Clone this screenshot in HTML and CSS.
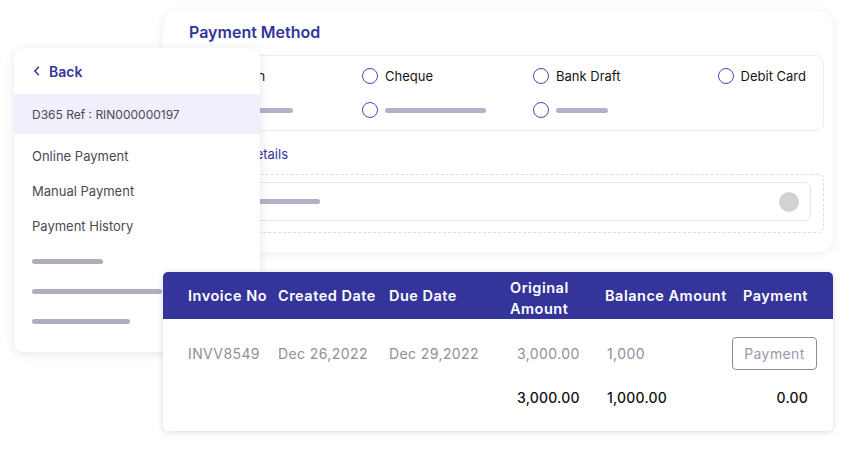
FILE: index.html
```html
<!DOCTYPE html>
<html lang="en">
<head>
<meta charset="utf-8">
<title>Payment</title>
<link rel="stylesheet" href="styles.css">
</head>
<body>
<div class="stage">
  <section class="card method">
    <h2 class="title">Payment Method</h2>
    <div class="options">
      <div class="opt"><span class="radio"></span><span>Western</span></div>
      <div class="opt"><span class="radio"></span><span>Cheque</span></div>
      <div class="opt"><span class="radio"></span><span>Bank Draft</span></div>
      <div class="opt end"><span class="radio"></span><span>Debit Card</span></div>
      <div class="opt"><span class="radio"></span><span class="bar b1"></span></div>
      <div class="opt"><span class="radio"></span><span class="bar b2"></span></div>
      <div class="opt"><span class="radio"></span><span class="bar b3"></span></div>
    </div>
    <a class="link">Payment Details</a>
    <div class="dash">
      <div class="input">
        <span class="bar b4"></span>
        <span class="dot"></span>
      </div>
    </div>
  </section>

  <aside class="card side">
    <div class="back">
      <svg width="7" height="10" viewBox="0 0 7 10"><path d="M5.5 1.2 L1.8 5 L5.5 8.8" fill="none" stroke="#35349a" stroke-width="1.5" stroke-linecap="round" stroke-linejoin="round"/></svg>
      <span>Back</span>
    </div>
    <div class="ref">D365 Ref : RIN000000197</div>
    <ul class="menu">
      <li>Online Payment</li>
      <li>Manual Payment</li>
      <li>Payment History</li>
    </ul>
    <div class="sbars">
      <span class="sbar s1"></span>
      <span class="sbar s2"></span>
      <span class="sbar s3"></span>
    </div>
  </aside>

  <section class="card table">
    <div class="thead grid">
      <div>Invoice No</div>
      <div>Created Date</div>
      <div>Due Date</div>
      <div class="two">Original<br>Amount</div>
      <div>Balance Amount</div>
      <div class="h6">Payment</div>
    </div>
    <div class="row grid">
      <div>INVV8549</div>
      <div>Dec 26,2022</div>
      <div>Dec 29,2022</div>
      <div class="c4">3,000.00</div>
      <div class="c5">1,000</div>
      <div class="c6"><button class="pay">Payment</button></div>
    </div>
    <div class="total grid">
      <div></div>
      <div></div>
      <div></div>
      <div class="c4">3,000.00</div>
      <div class="c5">1,000.00</div>
      <div class="c6 zero">0.00</div>
    </div>
  </section>
</div>
</body>
</html>
```

FILE: styles.css
```css
* { box-sizing: border-box; }
body {
  margin: 0;
  background: #fff;
  font-family: Inter, "Open Sans", sans-serif;
}
.stage {
  position: relative;
  width: 850px;
  height: 450px;
  overflow: hidden;
}
.card {
  position: absolute;
  background: #fff;
}

/* Payment method card */
.method {
  left: 163px;
  top: 11px;
  width: 670px;
  height: 241px;
  border-radius: 14px;
  box-shadow: 0 1px 10px rgba(0, 0, 0, 0.08);
  padding: 11px 9px 0 17px;
  display: flex;
  flex-direction: column;
}
.title {
  margin: 0;
  padding-left: 9px;
  font-size: 16px;
  line-height: 20px;
  font-weight: 600;
  color: #35349a;
}
.options {
  margin-top: 13px;
  height: 76px;
  border: 1px solid #ececf0;
  border-radius: 8px;
  display: grid;
  grid-template-columns: 171px 171px 1fr auto;
  grid-template-rows: 16px 16px;
  row-gap: 18px;
  align-content: center;
  padding: 0 17px 0 10px;
}
.opt {
  display: flex;
  align-items: center;
  gap: 7px;
  font-size: 13px;
  line-height: 16px;
  color: #161616;
}
.opt.end { justify-self: end; }
.radio {
  width: 16px;
  height: 16px;
  flex: none;
  border: 1.3px solid #4b49b3;
  border-radius: 50%;
}
.bar {
  display: block;
  height: 5px;
  border-radius: 3px;
  background: #b2b1c9;
}
.b1 { width: 79px; }
.b2 { width: 101px; }
.b3 { width: 52px; }
.b4 { width: 118px; }
.link {
  margin-top: 14px;
  padding-left: 9px;
  font-size: 13px;
  line-height: 18px;
  color: #35349a;
}
.dash {
  margin-top: 11px;
  height: 59px;
  border: 1px dashed #dcdce2;
  border-radius: 6px;
  padding: 7px 12px 11px 8px;
}
.input {
  height: 39px;
  border: 1px solid #e6e6ea;
  border-radius: 6px;
  display: flex;
  align-items: center;
  justify-content: space-between;
  padding: 0 11px 0 12px;
}
.dot {
  width: 20px;
  height: 20px;
  border-radius: 50%;
  background: #d2d2d4;
}

/* Sidebar */
.side {
  left: 14px;
  top: 48px;
  width: 246px;
  height: 304px;
  border-radius: 10px;
  box-shadow: 0 2px 12px rgba(0, 0, 0, 0.1);
  overflow: hidden;
}
.back {
  height: 46px;
  display: flex;
  align-items: center;
  gap: 9px;
  padding-left: 19px;
  font-size: 14px;
  font-weight: 600;
  color: #35349a;
}
.ref {
  height: 40px;
  background: #f0effb;
  display: flex;
  align-items: center;
  padding-left: 18px;
  font-size: 12px;
  color: #4a4a55;
}
.menu {
  list-style: none;
  margin: 0;
  padding: 4px 0 0 18px;
}
.menu li {
  height: 35px;
  display: flex;
  align-items: center;
  font-size: 13px;
  color: #4a4a55;
}
.sbars {
  padding: 16px 0 0 18px;
  display: flex;
  flex-direction: column;
  gap: 25px;
}
.sbar {
  display: block;
  height: 5px;
  border-radius: 3px;
  background: #afaeba;
}
.s1 { width: 71px; }
.s2 { width: 130px; }
.s3 { width: 98px; }

/* Table */
.table {
  left: 163px;
  top: 272px;
  width: 670px;
  height: 159px;
  border-radius: 5px;
  box-shadow: 0 1px 6px rgba(0, 0, 0, 0.15);
  overflow: hidden;
}
.grid {
  display: grid;
  grid-template-columns: 90px 111px 121px 95px 127px 1fr;
  align-items: center;
  padding-left: 25px;
}
.thead {
  height: 47px;
  background: #35349a;
  color: #fff;
  font-size: 14.5px;
  font-weight: 600;
  letter-spacing: 0.5px;
  line-height: 21px;
  white-space: nowrap;
}
.two { padding-top: 4px; }
.h6 { padding-left: 11px; }
.row {
  height: 68px;
  font-size: 14px;
  letter-spacing: 0.4px;
  color: #8f8fa0;
}
.total {
  height: 20px;
  font-size: 14px;
  font-weight: 500;
  letter-spacing: 0.2px;
  color: #111;
}
.c4 { padding-left: 7px; }
.c5 { padding-left: 2px; }
.c6 {
  display: flex;
  justify-content: flex-end;
  padding-right: 16px;
}
.zero { padding-right: 25px; }
.pay {
  width: 85px;
  height: 33px;
  border: 1px solid #8c8c90;
  border-radius: 4px;
  background: #fff;
  font-family: inherit;
  font-size: 14px;
  letter-spacing: 0.4px;
  color: #9a9aaa;
  padding: 0;
}
```
